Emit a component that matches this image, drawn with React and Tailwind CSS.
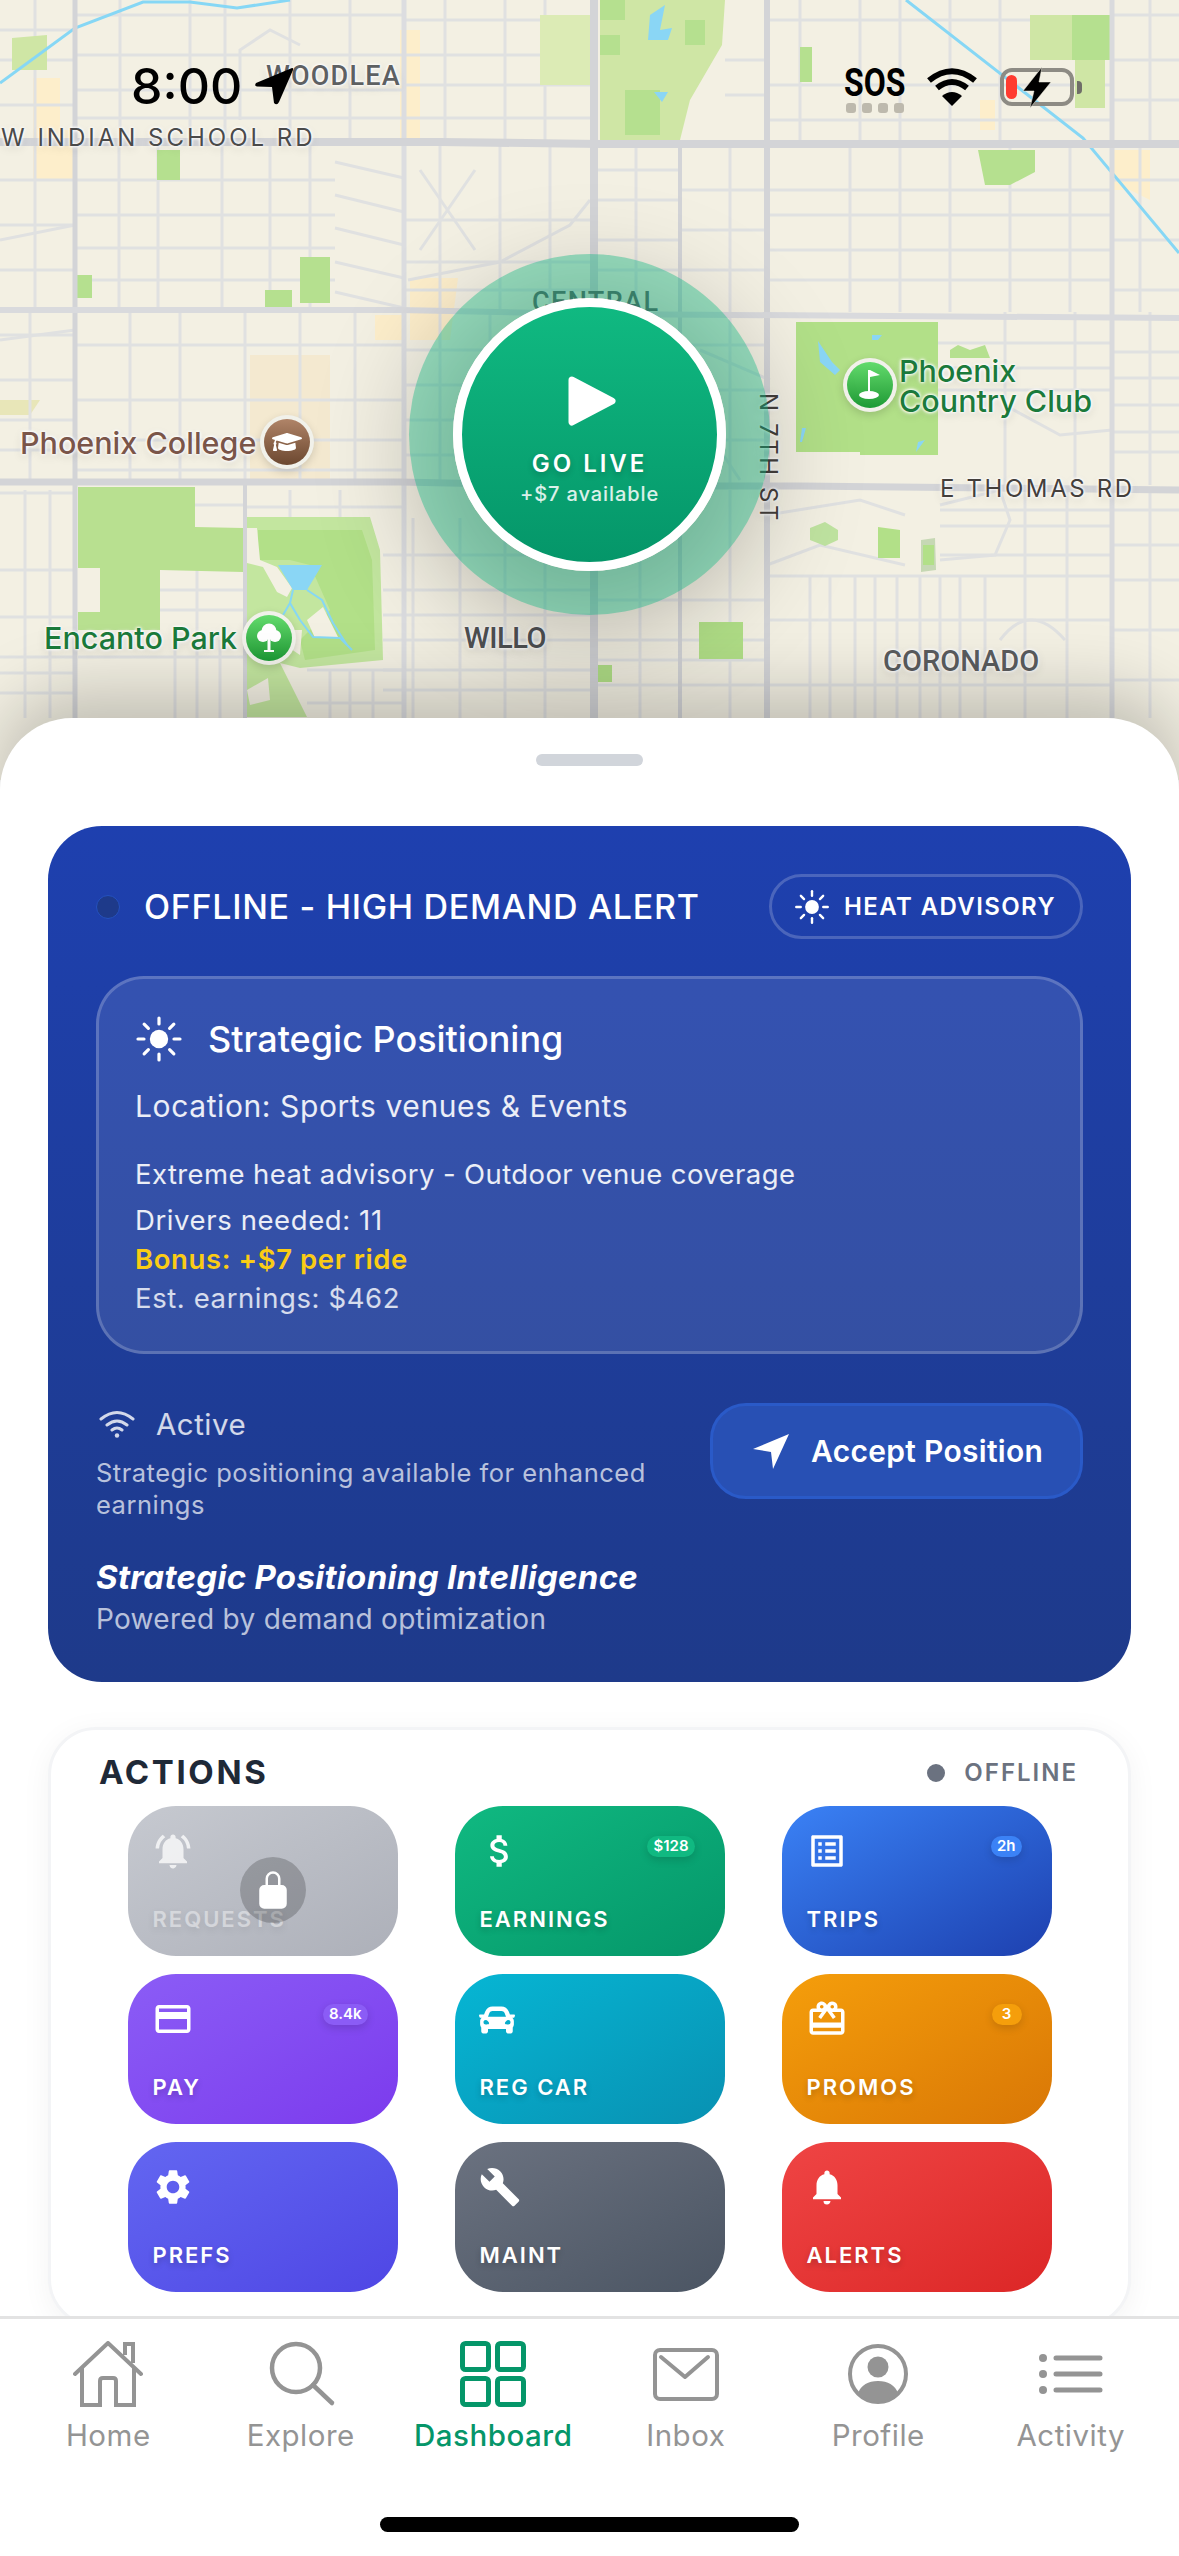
import React from "react";
import {
  MdNotificationsActive,
  MdAttachMoney,
  MdListAlt,
  MdCreditCard,
  MdCardGiftcard,
  MdSettings,
  MdBuild,
  MdNotifications,
} from "react-icons/md";
import { IoLockClosed } from "react-icons/io5";
import { FaGraduationCap, FaCar } from "react-icons/fa";

// street grid of the map, one entry per city block group
const blocks = [
  { x: [0, 75], y: [0, 143], vs: [35], hs: [30, 60, 105] },
  { x: [75, 404], y: [0, 143], vs: [120, 190, 225, 290, 350], hs: [15, 55, 90, 118] },
  { x: [404, 594], y: [0, 143], vs: [445, 505, 545], hs: [20, 55, 85, 118] },
  { x: [725, 767], y: [0, 143], vs: [], hs: [60, 95] },
  { x: [767, 1112], y: [0, 143], vs: [800, 860, 900, 950, 1000], hs: [20, 85, 120] },
  { x: [1112, 1179], y: [0, 143], vs: [1150], hs: [15, 60, 100] },
  { x: [0, 75], y: [143, 312], vs: [35], hs: [180, 225, 270] },
  { x: [75, 335], y: [143, 312], vs: [119, 158, 222, 270, 310], hs: [180, 215, 248, 280] },
  { x: [404, 594], y: [143, 312], vs: [440, 500, 550], hs: [220, 262, 290] },
  { x: [594, 680], y: [143, 312], vs: [636], hs: [170, 200, 240, 270] },
  { x: [680, 767], y: [143, 312], vs: [730], hs: [190, 230, 270] },
  { x: [767, 1112], y: [143, 312], vs: [850, 900, 950, 1010, 1070], hs: [190, 215, 250, 280] },
  { x: [1112, 1179], y: [143, 312], vs: [1140], hs: [180, 240, 290] },
  { x: [0, 75], y: [312, 485], vs: [30], hs: [335, 380, 420, 450] },
  { x: [75, 404], y: [312, 485], vs: [130, 180, 245, 300, 355], hs: [345, 400, 440, 470] },
  { x: [404, 594], y: [312, 485], vs: [440, 490, 540], hs: [350, 385, 420, 455] },
  { x: [594, 767], y: [312, 485], vs: [640, 680, 730], hs: [345, 390, 440] },
  { x: [938, 1112], y: [312, 485], vs: [1005, 1075], hs: [343, 368, 390] },
  { x: [1112, 1179], y: [312, 485], vs: [1150], hs: [352, 378, 405, 432, 452] },
  { x: [0, 75], y: [490, 718], vs: [25, 50], hs: [493, 570, 617, 657, 673, 693] },
  { x: [78, 245], y: [640, 718], vs: [175, 197, 220], hs: [657] },
  { x: [160, 245], y: [570, 640], vs: [197], hs: [590, 610] },
  { x: [195, 245], y: [490, 527], vs: [], hs: [505] },
  { x: [245, 404], y: [490, 517], vs: [290, 340], hs: [507] },
  { x: [307, 404], y: [670, 718], vs: [330, 350, 373], hs: [670, 703] },
  { x: [383, 594], y: [518, 718], vs: [413, 460, 505, 545], hs: [555, 590, 615, 640, 670, 690] },
  { x: [594, 767], y: [490, 718], vs: [640, 680, 730], hs: [600, 640, 660, 685] },
  { x: [767, 1112], y: [576, 718], vs: [810, 830, 855, 875, 897, 920, 940, 960, 985, 1025, 1067], hs: [576, 620, 685] },
  { x: [940, 1112], y: [490, 576], vs: [1025, 1067], hs: [510, 526, 555] },
  { x: [1112, 1179], y: [490, 718], vs: [1150], hs: [510, 545, 580, 630, 680] },
];

const curves = [
  "M335 162L404 178M335 195L404 212M335 228L404 245M335 262L404 278M335 292L404 308",
  "M408 280L500 262L570 225L590 200",
  "M300 45L270 30L240 50L240 120M420 170L475 250M475 170L420 250",
  "M0 240L75 225M0 340L75 330M767 515L860 500L905 515M767 565L820 545L905 565",
  "M940 505L1000 490L1010 520L995 555L940 560M1010 408L1060 435L1112 430",
  "M700 350L770 380M700 420L740 480M1000 640Q1030 600 1065 640",
];

const parks = [
  { fill: "#dcebb5", d: "M540 15H590V85H540Z" },
  { fill: "#cfe6a5", d: "M600 0H725L722 45L690 100L680 140H600Z" },
  { fill: "#b5e08f", d: "M600 0H625V20H600ZM600 35H620V55H600ZM685 20H705V45H685ZM625 90H660V135H625Z" },
  { fill: "#b5e08f", d: "M800 47H812V82H800ZM157 150H180V180H157ZM300 257H330V303H300ZM77 275H92V298H77ZM265 290H292V308H265Z" },
  { fill: "#cfe6a5", d: "M12 38L47 35V70H12ZM1030 15H1110V48H1075V60H1030ZM1075 60H1105V108H1075Z" },
  { fill: "#b5e08f", d: "M1072 15H1110V60H1072ZM978 150H1035V172L1010 185H985Z" },
  { fill: "#b2e088", d: "M796 322H938V455H860V452H796Z" },
  { fill: "#b8e090", d: "M78 487H195V527L243 528V572L160 570V630H78V612H100V568H78Z" },
  { fill: "#c3e69f", d: "M247 517H370L380 550L383 660L300 668L280 663L307 717H247Z" },
  { fill: "#b2e088", d: "M258 530H362L372 560L375 650L305 660L300 640L330 610L310 565L290 560H258Z" },
  { fill: "#f3f0e3", d: "M247 528H257L260 560L277 567L292 588L287 597L277 592L263 567L247 563ZM307 620L323 607L338 637L315 638ZM292 630L302 630L300 655L285 645ZM247 690L268 678L270 700L250 705Z" },
  { fill: "#b2e088", d: "M878 527L900 530V558H878ZM699 622H743V659H699ZM598 665H612V682H598Z" },
  { fill: "#bfe3a0", d: "M810 528L825 522L838 530L838 540L825 546L810 540Z" },
  { fill: "#c6d8b4", d: "M921 540L935 538L936 570L921 572Z" },
  { fill: "#b2e088", d: "M923 545H934V565H923Z" },
  { fill: "#b5e08f", d: "M950 350L958 345L970 350L985 345L990 358H950Z" },
];

const yellows = "M33 78H60V180H33ZM60 130H75V180H60ZM375 315H405V340H375ZM410 278H458L450 340H410ZM400 30H420V140H400ZM640 0H660V10H640ZM980 100H995V130H980ZM1112 150H1150V200L1130 190H1112Z";

const labelHalo = "[text-shadow:0_0_3px_#fff,0_0_3px_#fff,0_0_5px_#fff,0_3px_10px_rgba(0,0,0,.15)]";

function MapBackground() {
  return (
    <svg className="absolute inset-0" width="1179" height="780" viewBox="0 0 1179 780" fill="none">
      <rect width="1179" height="780" fill="#f3f0e3" />
      <path d={yellows} fill="#fdeecb" />
      <path d="M250 355H330V483H250Z" fill="#f4e9d0" />
      <path d="M0 400H40L30 415H0Z" fill="#e8e6b8" />
      <g stroke="#e0e1e1" strokeWidth="3">
        {blocks.map((b, i) => (
          <g key={i}>
            {b.vs.map((x) => (
              <path key={"v" + x} d={`M${x} ${b.y[0]}V${b.y[1]}`} />
            ))}
            {b.hs.map((y) => (
              <path key={"h" + y} d={`M${b.x[0]} ${y}H${b.x[1]}`} />
            ))}
          </g>
        ))}
        {curves.map((d, i) => (
          <path key={i} d={d} />
        ))}
      </g>
      {parks.map((p, i) => (
        <path key={i} d={p.d} fill={p.fill} />
      ))}
      {/* water */}
      <g stroke="#86d7f5" strokeWidth="3">
        <path d="M0 83L75 28L143 2L190 2L237 8L290 0" />
        <path d="M906 0L1083 138L1179 253" />
        <path d="M293 590L290 603L300 620L313 637L340 638L352 650" strokeWidth="2" />
        <path d="M307 590L322 600L333 623L347 645M290 603L283 615" strokeWidth="2" />
      </g>
      <path d="M278 565L322 565L307 590L293 590Z" fill="#8ad6f5" />
      <path d="M650 15L665 5L660 30L672 28L668 40H648Z" fill="#8ad6f5" />
      <path d="M654 92H668L662 102Z" fill="#8ad6f5" />
      <path d="M818 341L832 362L840 370L835 375L820 362ZM872 335H882L878 340H872ZM802 428H806L802 442H800ZM918 442L925 440L916 452Z" fill="#8ad6f5" />
      {/* arterials */}
      <g stroke="#d3d4d7">
        <path d="M75 0V718" strokeWidth="5" />
        <path d="M245 485V718M680 143V718" strokeWidth="4" />
        <path d="M404 0V718" strokeWidth="5" stroke="#dcdde0" />
        <path d="M594 0V718" strokeWidth="8" />
        <path d="M767 0V718" strokeWidth="6" />
        <path d="M1112 0V718" strokeWidth="5" stroke="#d9dadd" />
        <path d="M0 142H440L600 144H1179" strokeWidth="8" />
        <path d="M0 310H400L600 314L1179 318" strokeWidth="6" stroke="#d9dadd" />
        <path d="M0 482H400L600 486H800L1179 490" strokeWidth="7" />
      </g>
    </svg>
  );
}

function Pin({ className, from, children }) {
  return (
    <div className={`absolute w-[54px] h-[54px] rounded-full bg-[#f1f1ea] flex items-center justify-center shadow-[0_3px_8px_rgba(0,0,0,.15)] ${className}`}>
      <div className={`w-[46px] h-[46px] rounded-full flex items-center justify-center text-white ${from}`}>{children}</div>
    </div>
  );
}

function MapLabels() {
  return (
    <>
      <span className={`absolute left-[1px] top-[124px] text-[24px] leading-[28px] tracking-[3px] text-[#4a4a4a] whitespace-nowrap ${labelHalo}`}>W INDIAN SCHOOL RD</span>
      <span className={`absolute left-[266px] top-[60px] text-[27px] leading-[32px] font-medium tracking-[1.2px] text-[#5d6062] whitespace-nowrap [font-family:Roboto,sans-serif] ${labelHalo}`}>WOODLEA</span>
      <span className="absolute left-[532px] top-[286px] text-[27px] leading-[32px] font-medium tracking-[1.4px] text-[#5d6062] whitespace-nowrap [font-family:Roboto,sans-serif]">CENTRAL</span>
      <span className={`absolute left-[940px] top-[474px] text-[24px] leading-[30px] tracking-[2.6px] text-[#443f3c] whitespace-nowrap ${labelHalo}`}>E THOMAS RD</span>
      <span className={`absolute left-[768px] top-[393px] text-[24px] leading-[24px] tracking-[2.6px] text-[#443f3c] whitespace-nowrap origin-top-left rotate-90 translate-x-[12px] ${labelHalo}`}>N 7TH ST</span>
      <span className={`absolute left-[464px] top-[621px] text-[29px] leading-[34px] font-medium tracking-[-.4px] text-[#505254] whitespace-nowrap [font-family:Roboto,sans-serif] ${labelHalo}`}>WILLO</span>
      <span className={`absolute left-[883px] top-[644px] text-[29px] leading-[34px] font-medium text-[#5a5c5e] whitespace-nowrap [font-family:Roboto,sans-serif] ${labelHalo}`}>CORONADO</span>

      <span className={`absolute left-[20px] top-[425px] text-[30.5px] leading-[36px] font-medium text-[#7a5549] whitespace-nowrap ${labelHalo}`}>Phoenix College</span>
      <Pin className="left-[260px] top-[415px]" from="bg-gradient-to-b from-[#b08468] to-[#6c4830]">
        <FaGraduationCap size={30} />
      </Pin>

      <span className={`absolute left-[44px] top-[620px] text-[30.5px] leading-[36px] font-medium text-[#1b7a3b] whitespace-nowrap ${labelHalo}`}>Encanto Park</span>
      <Pin className="left-[242px] top-[611px]" from="bg-gradient-to-b from-[#62db6c] to-[#1a9a35]">
        <svg width="26" height="30" viewBox="0 0 26 30" fill="#fff">
          <circle cx="13" cy="8" r="7.5" />
          <circle cx="7" cy="13" r="6" />
          <circle cx="19" cy="13" r="6" />
          <path d="M11.5 14H14.5V27H18V29H8V27H11.5Z" />
        </svg>
      </Pin>

      <span className={`absolute left-[899px] top-[356px] text-[30.5px] leading-[30px] font-medium text-[#1b7a3b] whitespace-nowrap ${labelHalo}`}>
        Phoenix
        <br />
        Country Club
      </span>
      <Pin className="left-[843px] top-[358px]" from="bg-gradient-to-b from-[#62db6c] to-[#1a9a35]">
        <svg width="28" height="32" viewBox="0 0 28 32" fill="#fff">
          <path d="M12 1V23H14V8L24 6L14 1Z" />
          <ellipse cx="13" cy="26" rx="10" ry="4" />
        </svg>
      </Pin>
    </>
  );
}

function StatusBar() {
  return (
    <>
      <div className="absolute left-[131px] top-[56px] flex items-center">
        <span className="text-[50px] leading-[60px] font-medium text-black">8:00</span>
        <svg className="ml-[12px]" width="40" height="39" viewBox="0 0 40 39" fill="#000">
          <path d="M38 1L2 16Q0 19 3 19.5L18 20L20 36Q23 39 25 35L39 3Q39.5 0.5 38 1Z" />
        </svg>
      </div>
      <div className="absolute left-[844px] top-[60px] flex flex-col">
        <span className="text-[39px] leading-[46px] font-bold text-black [font-family:Roboto,sans-serif] origin-left scale-x-[.82] whitespace-nowrap">SOS</span>
        <div className="flex gap-[6px] ml-[2px] -mt-[3px]">
          <span className="w-[10px] h-[10px] rounded-[3px] bg-[#bdb9ad]" />
          <span className="w-[10px] h-[10px] rounded-[3px] bg-[#bdb9ad]" />
          <span className="w-[10px] h-[10px] rounded-[3px] bg-[#bdb9ad]" />
          <span className="w-[10px] h-[10px] rounded-[3px] bg-[#bdb9ad]" />
        </div>
      </div>
      <svg className="absolute left-[927px] top-[68px]" width="50" height="38" viewBox="0 0 50 38" fill="none" stroke="#000" strokeWidth="6">
        <path d="M2 12.5Q25 -6 48 12.5" />
        <path d="M10 20Q25 8 40 20" />
        <path d="M25 38L15 28Q25 20 35 28Z" fill="#000" stroke="none" />
      </svg>
      <div className="absolute left-[1000px] top-[68px] w-[74px] h-[38px] rounded-[12px] border-[4px] border-[#8d8b84]">
        <div className="ml-[2px] mt-[3px] w-[11px] h-[24px] rounded-[6px] bg-[#ff3b30]" />
      </div>
      <div className="absolute left-[1077px] top-[81px] w-[5px] h-[13px] rounded-r-[4px] bg-[#6f6e68]" />
      <svg className="absolute left-[1022px] top-[67px]" width="30" height="41" viewBox="0 0 30 41" fill="#000" stroke="#f3f0e3" strokeWidth="0.5">
        <path d="M20 0L1 24H12L8 41L29 15H17Z" />
      </svg>
    </>
  );
}

function GoLive() {
  return (
    <button className="absolute left-[453px] top-[298px] w-[273px] h-[273px] rounded-full border-[9px] border-white bg-gradient-to-b from-[#10b981] to-[#059669] flex flex-col items-center text-white shadow-[0_0_0_44px_rgba(16,185,129,.4),0_24px_110px_30px_rgba(0,0,0,.28)]">
      <svg className="mt-[67px] ml-[4px]" width="48" height="54" viewBox="0 0 48 54" fill="#fff">
        <path d="M4 6L44 27L4 48Z" stroke="#fff" strokeWidth="7" strokeLinejoin="round" />
      </svg>
      <span className="mt-[21px] text-[24px] leading-[30px] font-semibold tracking-[3px] [text-shadow:0_3px_6px_rgba(0,0,0,.2)]">GO LIVE</span>
      <span className="mt-[2px] text-[20px] leading-[26px] font-medium tracking-[.9px] text-white/85">+$7 available</span>
    </button>
  );
}

function Sun({ size, dot = 8 }) {
  const rays = [0, 45, 90, 135, 180, 225, 270, 315];
  return (
    <svg width={size} height={size} viewBox="0 0 24 24" fill="#fff" stroke="#fff" strokeWidth="1.6" strokeLinecap="round">
      <circle cx="12" cy="12" r={dot / 2 + 0.6} stroke="none" />
      {rays.map((r) => (
        <path key={r} d="M12 1.5V4.5" transform={`rotate(${r} 12 12)`} />
      ))}
    </svg>
  );
}

function AlertCard() {
  return (
    <div className="rounded-[54px] bg-gradient-to-b from-[#1e40af] to-[#1e3a8a] px-12 pt-12 pb-[45px] text-white">
      <div className="flex items-center justify-between h-[65px]">
        <div className="flex items-center gap-[24px]">
          <span className="w-[24px] h-[24px] rounded-full bg-[#1e3a8a] border border-[#2451c0]" />
          <span className="text-[34px] font-medium tracking-[.7px] whitespace-nowrap">OFFLINE - HIGH DEMAND ALERT</span>
        </div>
        <div className="w-[314px] h-[65px] rounded-full border-[3px] border-white/20 flex items-center pl-[22px] gap-[14px]">
          <Sun size={36} />
          <span className="text-[24px] font-semibold tracking-[1.4px]">HEAT ADVISORY</span>
        </div>
      </div>

      <div className="mt-[37px] rounded-[48px] border-[3px] border-white/20 bg-white/10 pl-[36px] pr-6 pt-[39px] pb-[33px]">
        <div className="flex items-center gap-[25px] h-[42px]">
          <Sun size={48} />
          <span className="text-[36px] font-medium">Strategic Positioning</span>
        </div>
        <p className="mt-[26px] text-[30px] leading-[40px] tracking-[.6px] text-white/90">Location: Sports venues &amp; Events</p>
        <p className="mt-[29px] mb-[7px] text-[27.5px] leading-[39px] tracking-[.4px] text-white/90">Extreme heat advisory - Outdoor venue coverage</p>
        <p className="text-[27.5px] leading-[39px] tracking-[.6px] text-white/90">Drivers needed: 11</p>
        <p className="text-[27.5px] leading-[39px] tracking-[.6px] font-semibold text-[#facc15]">Bonus: +$7 per ride</p>
        <p className="text-[27.5px] leading-[39px] tracking-[.6px] text-white/80">Est. earnings: $462</p>
      </div>

      <div className="mt-[49px] flex justify-between items-start">
        <div className="w-[570px]">
          <div className="mt-[6px] flex items-center gap-[21px] h-[30px] pl-[3px] text-white/80">
            <svg width="36" height="28" viewBox="0 0 36 28" fill="none" stroke="currentColor" strokeWidth="3" strokeLinecap="round">
              <path d="M2 9Q18 -4 34 9M8 15Q18 7 28 15M13 20Q18 16 23 20" />
              <circle cx="18" cy="25.5" r="2.2" fill="currentColor" stroke="none" />
            </svg>
            <span className="text-[29.5px] tracking-[.5px]">Active</span>
          </div>
          <p className="mt-[18px] text-[25.5px] leading-[32px] tracking-[.5px] text-white/70">Strategic positioning available for enhanced earnings</p>
        </div>
        <button className="w-[373px] h-[96px] rounded-[36px] border-[3px] border-[#2a5ac8] bg-[#2850b4] flex items-center pl-[40px] gap-[22px]">
          <svg width="36" height="35" viewBox="0 0 36 35" fill="#fff">
            <path d="M36 0L0 15L18 18L20 35Z" />
          </svg>
          <span className="text-[30px] font-semibold tracking-[.3px] whitespace-nowrap">Accept Position</span>
        </button>
      </div>

      <p className="mt-[36px] text-[33px] leading-[40px] font-bold italic tracking-[.3px]">Strategic Positioning Intelligence</p>
      <p className="mt-[4px] text-[28px] leading-[36px] tracking-[.3px] text-white/70">Powered by demand optimization</p>
    </div>
  );
}

const tiles = [
  { label: "REQUESTS", Icon: MdNotificationsActive, bg: "from-[#c6c9d0] to-[#adb0b9]", locked: true },
  { label: "EARNINGS", Icon: MdAttachMoney, bg: "from-[#10b981] to-[#059669]", badge: "$128", badgeBg: "bg-[#10b981]" },
  { label: "TRIPS", Icon: MdListAlt, bg: "from-[#3b82f6] to-[#1e40af]", badge: "2h", badgeBg: "bg-[#3b82f6]" },
  { label: "PAY", Icon: MdCreditCard, bg: "from-[#8b5cf6] to-[#7c3aed]", badge: "8.4k", badgeBg: "bg-[#8b5cf6]" },
  { label: "REG CAR", Icon: FaCar, iconSize: 36, iconClass: "mt-[4px]", bg: "from-[#06b6d4] to-[#0891b2]" },
  { label: "PROMOS", Icon: MdCardGiftcard, bg: "from-[#f59e0b] to-[#d97706]", badge: "3", badgeBg: "bg-[#f59e0b]" },
  { label: "PREFS", Icon: MdSettings, bg: "from-[#6366f1] to-[#4f46e5]" },
  { label: "MAINT", Icon: MdBuild, bg: "from-[#6b7280] to-[#4b5563]" },
  { label: "ALERTS", Icon: MdNotifications, bg: "from-[#ef4444] to-[#dc2626]" },
];

function Tile({ label, Icon, iconSize = 42, iconClass = "", bg, badge, badgeBg, locked }) {
  return (
    <div className={`relative w-[270px] h-[150px] rounded-[48px] bg-gradient-to-br ${bg} p-6 flex flex-col justify-between text-white`}>
      <Icon size={iconSize} className={`${iconClass} ${locked ? "opacity-75" : ""}`} />
      <span className={`text-[22px] leading-[28px] font-semibold tracking-[2px] pl-[1px] -mb-[1px] [text-shadow:0_3px_6px_rgba(0,0,0,.2)] ${locked ? "opacity-40" : ""}`}>{label}</span>
      {badge && (
        <span className={`absolute top-[30px] right-[30px] h-[21px] min-w-[30px] px-[6px] rounded-full flex items-center justify-center text-[15px] font-semibold shadow-[0_3px_8px_rgba(0,0,0,.15)] ${badgeBg}`}>{badge}</span>
      )}
      {locked && (
        <span className="absolute left-[112px] top-[51px] w-[66px] h-[66px] rounded-full bg-black/20 flex items-center justify-center">
          <IoLockClosed size={40} />
        </span>
      )}
    </div>
  );
}

function ActionsCard() {
  return (
    <div className="mt-[45px] h-[600px] rounded-[48px] border-[3px] border-[#f3f4f6] bg-white shadow-[0_6px_30px_rgba(0,0,0,.05)]">
      <div className="flex items-center justify-between pl-[48px] pr-[50px] pt-[14px] pb-[4px] h-[76px]">
        <span className="text-[33px] font-bold tracking-[2.6px] text-[#1f2937]">ACTIONS</span>
        <div className="flex items-center gap-[19px]">
          <span className="w-[18px] h-[18px] rounded-full bg-[#6b7280]" />
          <span className="text-[24px] font-semibold tracking-[2px] text-[#6b7280]">OFFLINE</span>
        </div>
      </div>
      <div className="grid grid-cols-[270px_270px_270px] gap-x-[57px] gap-y-[18px] justify-center">
        {tiles.map((t) => (
          <Tile key={t.label} {...t} />
        ))}
      </div>
    </div>
  );
}

function BottomNav() {
  const gray = "#949494";
  const items = [
    {
      label: "Home",
      icon: (
        <svg width="70" height="66" viewBox="0 0 70 66" fill="none" stroke={gray} strokeWidth="4">
          <path d="M2 33L35 2L68 33" strokeLinejoin="round" strokeLinecap="round" />
          <path d="M52 14V3H60V22" />
          <path d="M9 27V64H27V40Q27 37 30 37H40Q43 37 43 40V64H61V27" />
        </svg>
      ),
    },
    {
      label: "Explore",
      icon: (
        <svg width="70" height="66" viewBox="0 0 70 66" fill="none" stroke={gray} strokeWidth="4.5" strokeLinecap="round">
          <circle cx="30" cy="27" r="24" />
          <path d="M47 44L66 62" />
        </svg>
      ),
    },
    {
      label: "Dashboard",
      active: true,
      icon: (
        <svg width="66" height="66" viewBox="0 0 66 66" fill="none" stroke="#059669" strokeWidth="5">
          <rect x="2.5" y="2.5" width="26" height="26" rx="3" />
          <rect x="37.5" y="2.5" width="26" height="26" rx="3" />
          <rect x="2.5" y="37.5" width="26" height="26" rx="3" />
          <rect x="37.5" y="37.5" width="26" height="26" rx="3" />
        </svg>
      ),
    },
    {
      label: "Inbox",
      icon: (
        <svg width="70" height="66" viewBox="0 0 70 66" fill="none" stroke={gray} strokeWidth="4">
          <rect x="4" y="9" width="62" height="49" rx="5" />
          <path d="M10 16L34 36L57 16" strokeLinecap="round" strokeLinejoin="round" />
        </svg>
      ),
    },
    {
      label: "Profile",
      icon: (
        <svg width="66" height="66" viewBox="0 0 66 66" fill={gray}>
          <circle cx="33" cy="33" r="28" fill="none" stroke={gray} strokeWidth="4" />
          <circle cx="33" cy="26" r="10.5" />
          <path d="M13 52Q18 40 33 40Q48 40 53 52Q44 61 33 61Q22 61 13 52Z" />
        </svg>
      ),
    },
    {
      label: "Activity",
      icon: (
        <svg width="66" height="66" viewBox="0 0 66 66" fill={gray} stroke={gray} strokeWidth="5" strokeLinecap="round">
          <path d="M18 17H62M18 33H62M18 49H62" fill="none" />
          <circle cx="5" cy="17" r="4" stroke="none" />
          <circle cx="5" cy="33" r="4" stroke="none" />
          <circle cx="5" cy="49" r="4" stroke="none" />
        </svg>
      ),
    },
  ];
  return (
    <nav className="relative h-[240px] shrink-0 bg-white border-t-[3px] border-[#e3e3e3] px-3 pt-[22px] grid grid-cols-6 items-start">
      {items.map((item) => (
        <div key={item.label} className="flex flex-col items-center">
          <div className="h-[66px] flex items-center justify-center">{item.icon}</div>
          <span className={`mt-[12px] text-[29.5px] leading-[32px] tracking-[.5px] ${item.active ? "font-medium text-[#059669]" : "text-[#949494]"}`}>{item.label}</span>
        </div>
      ))}
      <div className="absolute left-[380px] top-[198px] w-[419px] h-[15px] rounded-full bg-black" />
    </nav>
  );
}

export default function App() {
  return (
    <div className="relative w-[1179px] h-[2556px] overflow-hidden flex flex-col bg-white [font-family:Inter,sans-serif]">
      <div className="relative h-[780px] shrink-0 overflow-hidden">
        <MapBackground />
        <MapLabels />
        <GoLive />
      </div>
      <StatusBar />
      <div className="relative -mt-[62px] flex-1 min-h-0 overflow-hidden rounded-t-[72px] bg-white px-12 shadow-[0_-24px_70px_rgba(0,0,0,.22)]">
        <div className="mx-auto mt-[36px] mb-[60px] w-[107px] h-[12px] rounded-full bg-[#d1d5db]" />
        <AlertCard />
        <ActionsCard />
      </div>
      <BottomNav />
    </div>
  );
}
